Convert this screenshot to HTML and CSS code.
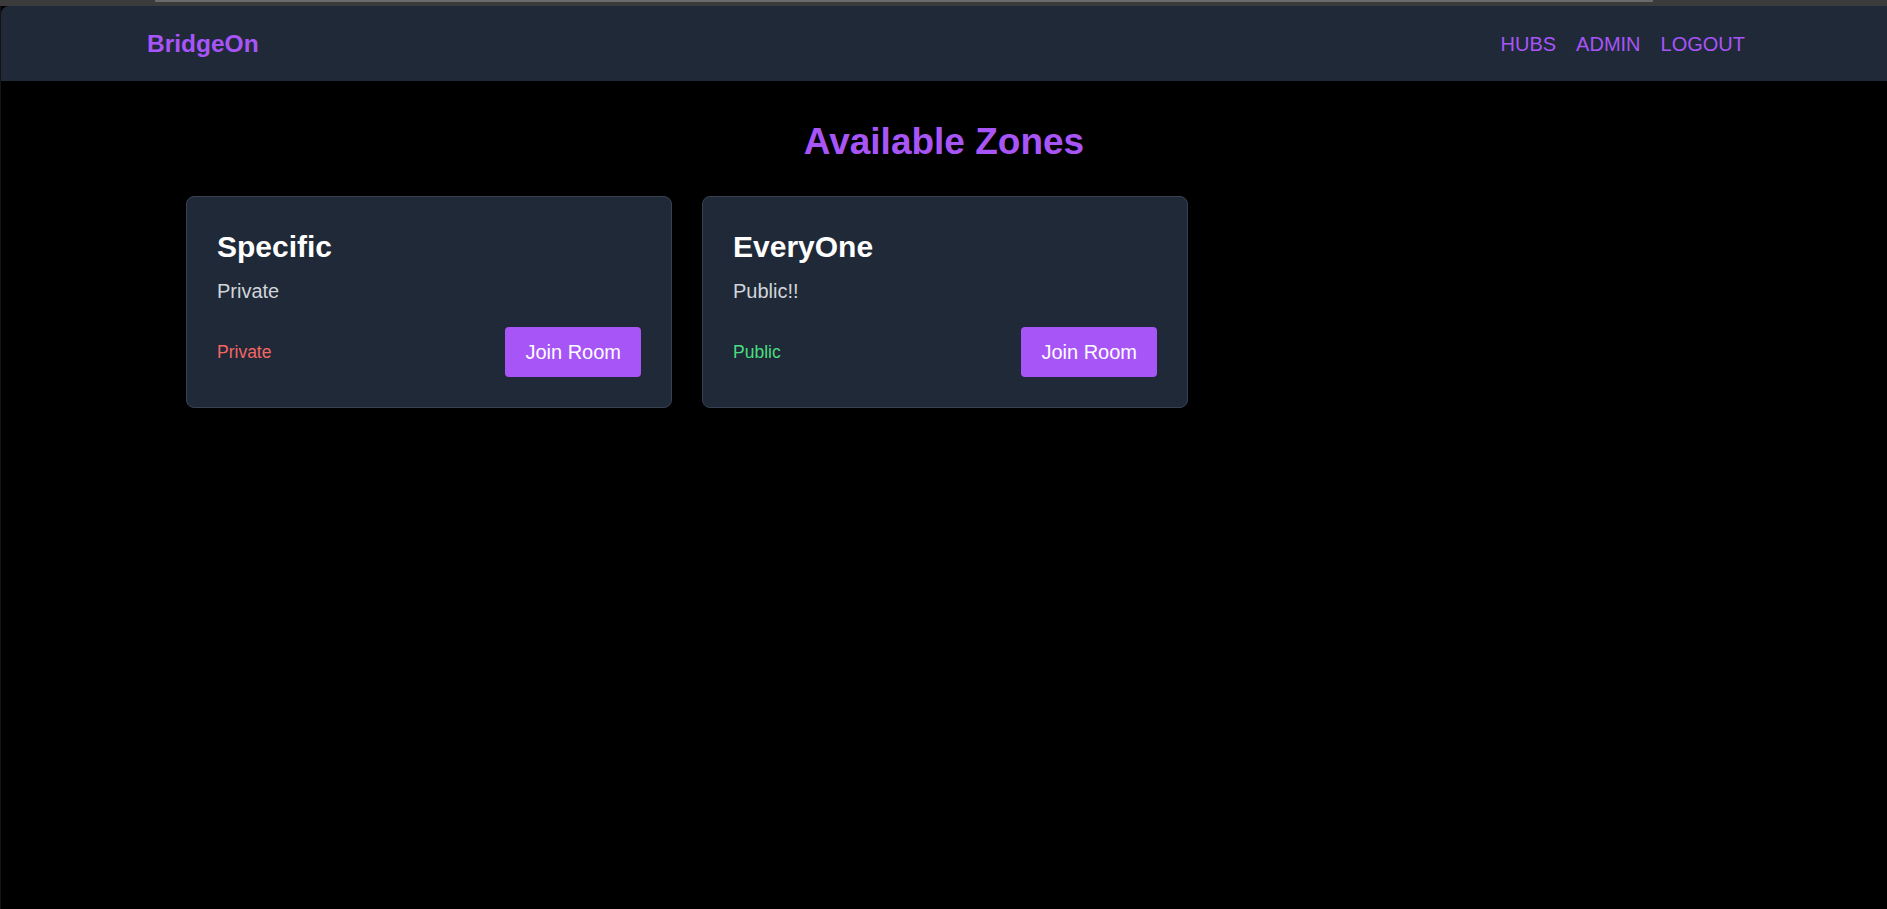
FILE: index.html
```html
<!DOCTYPE html>
<html lang="en">
<head>
<meta charset="utf-8">
<title>BridgeOn</title>
<link rel="stylesheet" href="styles.css">
</head>
<body>
<div class="frame-top"><div class="frame-line"></div></div>
<div class="window">
  <header class="navbar">
    <a class="brand" href="#">BridgeOn</a>
    <nav class="nav-links">
      <a href="#">HUBS</a>
      <a href="#">ADMIN</a>
      <a href="#">LOGOUT</a>
    </nav>
  </header>
  <main class="main">
    <h1 class="page-title">Available Zones</h1>
    <div class="zone-grid">
      <div class="zone-card">
        <h2 class="zone-name">Specific</h2>
        <p class="zone-desc">Private</p>
        <div class="zone-footer">
          <span class="zone-status private">Private</span>
          <button class="join-btn">Join Room</button>
        </div>
      </div>
      <div class="zone-card">
        <h2 class="zone-name">EveryOne</h2>
        <p class="zone-desc">Public!!</p>
        <div class="zone-footer">
          <span class="zone-status public">Public</span>
          <button class="join-btn">Join Room</button>
        </div>
      </div>
    </div>
  </main>
</div>
</body>
</html>
```

FILE: styles.css
```css
* { box-sizing: border-box; }
html, body {
  margin: 0;
  padding: 0;
  background: #000;
  height: 100%;
}
body {
  font-family: "Liberation Sans", Arial, sans-serif;
  display: flex;
  flex-direction: column;
  overflow: hidden;
}
.frame-top {
  height: 6px;
  background: #3b3b3b;
  padding: 0 234px 0 155px;
  flex: none;
}
.frame-line {
  height: 2px;
  background: #6a6a6a;
}
.window {
  flex: 1;
  border-left: 1px solid #141414;
  background: #000;
}
.navbar {
  height: 75px;
  background: #1f2937;
  border-top-left-radius: 8px;
  display: flex;
  align-items: center;
  justify-content: space-between;
  padding: 0 142px 0 146px;
}
.brand {
  color: #a855f7;
  font-weight: 700;
  font-size: 24.5px;
  text-decoration: none;
}
.nav-links {
  display: flex;
  gap: 20px;
  margin-top: 1px;
}
.nav-links a {
  color: #a855f7;
  font-size: 20px;
  text-decoration: none;
}
.main {
  padding-top: 40px;
}
.page-title {
  margin: 0 0 33px;
  text-align: center;
  color: #a855f7;
  font-size: 37px;
  line-height: 42px;
  font-weight: 700;
}
.zone-grid {
  width: 1518px;
  margin: 0 auto;
  display: grid;
  grid-template-columns: repeat(3, 1fr);
  gap: 30px;
  position: relative;
  left: 1px;
}
.zone-card {
  background: #1f2937;
  border: 1px solid #374151;
  border-radius: 8px;
  padding: 32px 30px 30px;
}
.zone-name {
  margin: 0 0 12px;
  color: #fff;
  font-size: 30px;
  line-height: 36px;
  font-weight: 700;
}
.zone-desc {
  margin: 0 0 22px;
  color: #d1d5db;
  font-size: 20px;
  line-height: 28px;
}
.zone-footer {
  display: flex;
  align-items: center;
  justify-content: space-between;
}
.zone-status {
  font-size: 17.5px;
}
.zone-status.private { color: #f56565; }
.zone-status.public { color: #4ade80; }
.join-btn {
  background: #a855f7;
  color: #fff;
  border: none;
  border-radius: 4px;
  font-family: inherit;
  font-size: 20px;
  line-height: 30px;
  padding: 10px 20px;
  cursor: pointer;
}
```
